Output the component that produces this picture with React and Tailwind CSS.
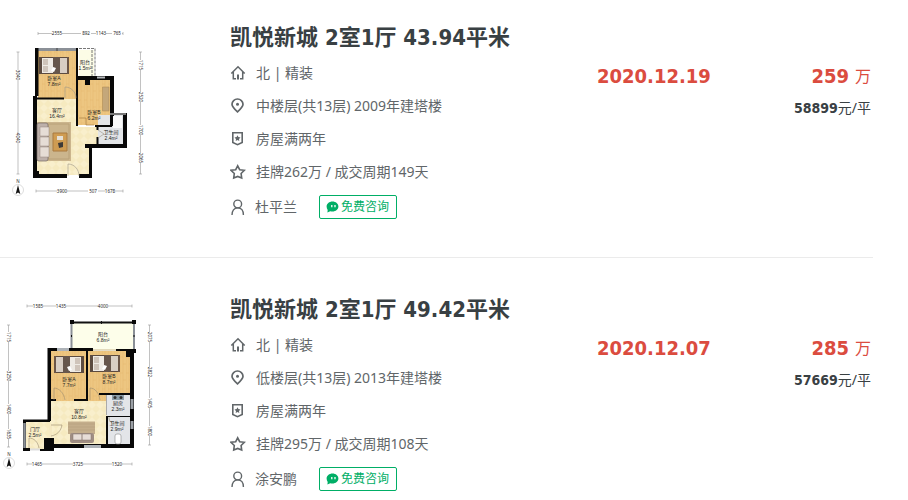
const listings = [
  {
    id: 1,
    title: "凯悦新城 2室1厅 43.94平米",
    facing: "北 | 精装",
    floor: "中楼层(共13层) 2009年建塔楼",
    tax: "房屋满两年",
    deal: "挂牌262万 / 成交周期149天",
    agent: "杜平兰",
    date: "2020.12.19",
    price: "259",
    unitPrice: "58899",
  },
  {
    id: 2,
    title: "凯悦新城 2室1厅 49.42平米",
    facing: "北 | 精装",
    floor: "低楼层(共13层) 2013年建塔楼",
    tax: "房屋满两年",
    deal: "挂牌295万 / 成交周期108天",
    agent: "涂安鹏",
    date: "2020.12.07",
    price: "285",
    unitPrice: "57669",
  },
];

const App = () => {
  return (
    <main className="bg-white pt-5 pr-[35px] font-['Noto_Sans','Noto_Sans_CJK_SC',sans-serif] text-sm text-[#616669]">
      <ul className="flex flex-col gap-[34px]">
        {listings.map((item) => (
          <li
            key={item.id}
            className="flex border-b border-[#ebebeb] pb-[31px] last:border-b-0 last:pb-0"
          >
            <a href={`#listing-${item.id}`} className="w-[230px] shrink-0">
              {item.id === 1 ? <PlanOne /> : <PlanTwo />}
            </a>

            <div className="w-[367px] shrink-0">
              <h2 className="h-9 text-[22px] leading-8 font-bold text-[#394043]">
                <a
                  href={`#listing-${item.id}`}
                  className="font-['DejaVu_Sans_Condensed','Noto_Sans_CJK_SC',sans-serif]"
                >
                  {item.title}
                </a>
              </h2>
              <InfoRow icon={<HouseIcon />} text={item.facing} />
              <InfoRow icon={<PinIcon />} text={item.floor} />
              <InfoRow icon={<BadgeIcon />} text={item.tax} />
              <InfoRow icon={<StarIcon />} text={item.deal} />
              <div className="flex h-[38px] items-center">
                <PersonIcon />
                <a href={`#agent-${item.id}`} className="ml-[9px]">
                  {item.agent}
                </a>
                <button
                  type="button"
                  className="ml-[22px] flex h-6 items-center gap-0.5 rounded-xs border border-[#00ae66] pr-[7px] pl-1.5 text-xs text-[#00ae66]"
                >
                  <ChatIcon />
                  免费咨询
                </button>
              </div>
            </div>

            <p className="mt-10 h-8 font-['DejaVu_Sans_Condensed',sans-serif] text-xl leading-8 font-bold text-[#db4c3f]">
              {item.date}
            </p>

            <div className="mt-10 mr-0.5 ml-auto text-right">
              <p className="flex h-8 items-center justify-end gap-1.5 text-base text-[#db4c3f]">
                <span className="font-['DejaVu_Sans_Condensed',sans-serif] text-xl font-bold">
                  {item.price}
                </span>
                万
              </p>
              <p className="flex h-8 items-center justify-end text-[#394043]">
                <span className="font-['DejaVu_Sans_Condensed',sans-serif] font-bold">
                  {item.unitPrice}
                </span>
                元/平
              </p>
            </div>
          </li>
        ))}
      </ul>
    </main>
  );
};

const InfoRow = ({ icon, text }) => {
  return (
    <div className="flex h-[33px] items-center gap-2.5">
      {icon}
      <span>{text}</span>
    </div>
  );
};

const HouseIcon = () => (
  <svg className="size-4" viewBox="0 0 16 16" fill="none" stroke="currentColor" strokeWidth="1.5">
    <path d="M1.3 8.5 8 1.8l6.7 6.7M3.3 7v6.8h2.7M12.7 7v6.8H10" />
    <path d="M8 9.5v5" strokeWidth="2" />
  </svg>
);

const PinIcon = () => (
  <svg className="size-4" viewBox="0 0 16 16" fill="none" stroke="currentColor" strokeWidth="1.7">
    <path d="M7.5 13.8C4.4 11 2 8.6 2 6.2a5.5 5.2 0 0 1 11 0c0 2.4-2.4 4.8-5.5 7.6Z" />
    <circle cx="7.5" cy="6.2" r="1.5" fill="currentColor" stroke="none" />
  </svg>
);

const BadgeIcon = () => (
  <svg className="size-4" viewBox="0 0 16 16" fill="none" stroke="currentColor" strokeWidth="1.6">
    <path d="M2.8 1.8h9.4v9.6L7.5 13.6l-4.7-2.2Z" />
    <path
      d="m7.5 4.2.9 1.9 2.1.3L9 7.9l.3 2.1-1.8-1-1.8 1L6 7.9 4.5 6.4l2.1-.3Z"
      fill="currentColor"
      stroke="none"
    />
  </svg>
);

const StarIcon = () => (
  <svg className="size-4" viewBox="0 0 16 16" fill="none" stroke="currentColor" strokeWidth="1.6">
    <path d="m7.7 1.8 2 3.9 4.7.6-3.3 3.2.6 4.5-4-1.6-4 1.6.6-4.5L1 6.3l4.7-.6Z" />
  </svg>
);

const PersonIcon = () => (
  <svg className="h-[17px] w-4" viewBox="0 0 16 17" fill="none" stroke="currentColor" strokeWidth="1.4">
    <circle cx="7.7" cy="5" r="3.9" />
    <path d="M2 16c0-4.2 2-7.1 5.7-7.1s5.7 2.9 5.7 7.1" />
  </svg>
);

const ChatIcon = () => (
  <svg className="h-3 w-[13px]" viewBox="0 0 13 12">
    <path
      d="M6.5.6C9.8.6 12.4 2.8 12.4 5.6S9.8 10.6 6.5 10.6c-.8 0-1.5-.1-2.2-.3L1.4 11.4l.3-2.5C1 8 .6 6.9.6 5.6.6 2.8 3.2.6 6.5.6Z"
      fill="#00ae66"
    />
    <path d="M5.8 4v2.2M9 4v2.2" stroke="#fff" strokeWidth="1.3" />
  </svg>
);

const Label = ({ x, y, name, area }) => (
  <g
    className="font-['Liberation_Sans','Noto_Sans_CJK_SC',sans-serif]"
    textAnchor="middle"
    fontSize="5"
    fill="#222"
  >
    <text x={x} y={y}>
      {name}
    </text>
    <text x={x} y={y + 6}>
      {area}
    </text>
  </g>
);

// Dimension line along one side of a plan, `parts` are [position, number]
const Ruler = ({ at, from, to, parts, vertical }) => (
  <g transform={vertical ? `translate(${at} 0) rotate(90)` : `translate(0 ${at})`}>
    <path d={`M${from} 0H${to}M${from} -1.5v3M${to} -1.5v3`} stroke="#999" strokeWidth=".6" />
    {parts.map(([pos, number]) => (
      <g key={pos}>
        <rect x={pos - 5} y="-2" width="10" height="4" fill="#fff" />
        <text x={pos} y="1.6" textAnchor="middle" fontSize="4.5" fill="#222">
          {number}
        </text>
      </g>
    ))}
  </g>
);

const Compass = ({ x, y }) => (
  <g transform={`translate(${x} ${y})`}>
    <circle r="5.5" fill="#fff" stroke="#bbb" strokeWidth=".5" />
    <path d="M0-5 2.3 4 0 2.5-2.3 4Z" fill="#111" />
    <text y="-7" textAnchor="middle" fontSize="4.5" fill="#333">
      N
    </text>
  </g>
);

const Bed = ({ x, y, flip }) => (
  <g transform={flip ? `translate(${x + 30} ${y}) scale(-1 1)` : `translate(${x} ${y})`}>
    <rect width="30" height="17" fill="#5c4b40" />
    <rect x="3" y="1" width="27" height="15" fill="#eeeae4" />
    <path d="M4 2h5v6H4zM4 9h5v6H4z" fill="#cfc4ba" />
    <path d="M14 0h7v17h-7z" fill="#66564c" />
    <path d="M21 1h7v15h-7z" fill="#d8cec4" />
    <path d="m14 10 3 1-2 4-3-1Z" fill="#fff" />
    <path d="M28 0h2v17h-2z" fill="#6b5546" />
  </g>
);

const Patterns = ({ id }) => (
  <defs>
    <pattern id={`wood-${id}`} width="6" height="16" patternUnits="userSpaceOnUse">
      <path d="M0 0h6v16H0z" fill="#edc681" />
      <path d="M0 0v16M3 0v16M0 4h3M3 11h3" stroke="#e2b76c" strokeWidth=".5" />
    </pattern>
    <pattern id={`stone-${id}`} width="8" height="8" patternUnits="userSpaceOnUse">
      <path d="M0 0h8v8H0z" fill="#f6eac0" />
      <path d="m0 4 4-4 4 4-4 4Z" fill="#f9efcc" />
    </pattern>
  </defs>
);

const PlanOne = () => (
  <svg className="w-40" viewBox="0 20 160 180">
    <Patterns id="one" />
    <path d="M38 51h40v48H38z" fill="url(#wood-one)" />
    <path d="M78 79h33v46H78z" fill="url(#wood-one)" />
    <path d="M37 99h41v28h20v18h-9v30H37z" fill="url(#stone-one)" />
    <path d="M79 50h15v27H79z" fill="#fcfce6" />
    <path d="M98 115h26v29H98z" fill="#e3e5e8" />
    <path d="M79 48.5h16V77M92 50v26" fill="none" stroke="#555" strokeWidth=".8" strokeDasharray="3 1" />
    <path d="M36 49.5h42" stroke="#8b9097" strokeWidth="3" />
    <path d="M57 48v3" stroke="#444" />
    <path d="M35 48h3.5v48H37v78h2v-3h-2v3h30v4H33V96h2z" fill="#080808" />
    <path d="M79 174h10v-26h-4v-4h38v-31h4v35H92v30H79z" fill="#080808" />
    <path d="M78 76h36v50h-4V80H90v5h-5v-5h-7z" fill="#080808" />
    <path d="M77 48v78M36 98.5h28M95 126h17" stroke="#080808" strokeWidth="2" fill="none" />
    <path d="M97.5 126v4M97.5 137v7" stroke="#080808" strokeWidth="2" />
    <path d="M110 114h16" stroke="#777" strokeWidth="2" />
    <path d="M97 77.5h8" stroke="#b5b8bb" strokeWidth="2" />
    <path d="M113 116h9v12h-9z" fill="#fafafa" />
    <path d="M102.5 87h6.5v24h-6.5z" fill="#c4a77a" stroke="#a98650" strokeWidth=".5" />
    <Bed x={39} y={57} />
    <path d="M37 122h34v39H37z" fill="#cbb58d" />
    <path d="M48 124h21v35H48z" fill="none" stroke="#b9a179" />
    <rect x="37" y="123" width="11" height="38" rx="2" fill="#bdb0aa" stroke="#756b66" strokeWidth=".7" />
    <path d="M40 127h9v9h-9zM40 137h9v9h-9zM40 147h9v10h-9z" fill="#e6ddd6" stroke="#94867d" strokeWidth=".5" />
    <path d="M53 133h14v18H53z" fill="#cf9c52" stroke="#a97b40" />
    <path d="M57 136h6v4h-6z" fill="#e5e0d6" />
    <path d="m58 143 5-1v5l-4 1Z" fill="#3d3a38" />
    <path d="M65 98V87c6 0 11 5 11 11M68 176v-12c6 0 11 5 11 12M98 130l6 4-6 4" fill="none" stroke="#9a9384" strokeWidth=".6" />
    <path d="M79 118h7v7h8" fill="none" stroke="#9a7138" strokeWidth=".6" />
    <Label x={54} y={80} name="卧室A" area="7.8m²" />
    <Label x={85} y={64} name="阳台" area="1.5m²" />
    <Label x={57} y={112} name="客厅" area="16.4m²" />
    <Label x={94} y={114} name="卧室B" area="6.2m²" />
    <Label x={111} y={134} name="卫生间" area="2.4m²" />
    <Ruler at={33.5} from={38} to={123} parts={[[57, "2555"], [86, "892"], [101, "1143"], [117, "765"]]} />
    <Ruler at={191} from={36} to={123} parts={[[62, "3900"], [93, "507"], [110, "1678"]]} />
    <Ruler at={18} from={52} to={174} parts={[[75, "3040"], [138, "4040"]]} vertical />
    <Ruler at={140.5} from={52} to={174} parts={[[65, "1715"], [97, "2520"], [130, "1700"], [158, "2065"]]} vertical />
    <Compass x={18} y={190} />
  </svg>
);

const PlanTwo = () => (
  <svg className="w-40" viewBox="0 291 160 180">
    <Patterns id="two" />
    <path d="M72 322h61v27H72z" fill="#fdfeea" />
    <path d="M51 350h80v43h-24v7H51z" fill="url(#wood-two)" />
    <path d="M50 400h57v44H50zM26 421h26v27H26z" fill="url(#stone-two)" />
    <path d="M107 394h24v50h-24z" fill="#e3e5e8" />
    <path d="M71.5 323v25M134 323v25" stroke="#8b9097" strokeWidth="2" />
    <path d="M72 321.5h62" stroke="#111" strokeWidth="2" />
    <path d="M101.5 320v3M71.5 334v2M134 334v2" stroke="#111" />
    <path d="M70 319h4v4h-4zM132 319h4v4h-4zM132 348h4v4h-4z" fill="#080808" />
    <path d="M47.5 347H93v3h-5v50H74v-2h12v-48H51v48h5v2h-5v20h-3.5z" fill="#080808" />
    <path d="M116 348h18v99H50v-4h56v-28h24v-21H99v-2h31v-36h-4v-6h-10zM108 416v27h22v-27z" fill="#080808" fillRule="evenodd" />
    <path d="M23 418.5h27v2.5H26v26h4v3h-7zM44 437h10v13H40v-2h4z" fill="#080808" />
    <path d="M24.5 422v25" stroke="#8b9097" strokeWidth="2.5" />
    <path d="M30 448.5h10" stroke="#ddd" strokeWidth="2" />
    <path d="M57 348.5h12M84 445.5h17" stroke="#aeb3b8" strokeWidth="3" />
    <path d="M132 398v10M132 420v8" stroke="#9a9fa5" strokeWidth="3" />
    <path d="M93 349h23" stroke="#c9b98f" />
    <path d="M106.5 394v20" stroke="#aaa" strokeWidth="1" />
    <path d="M50.5 424v12" stroke="#f5e8c2" strokeWidth="3" />
    <Bed x={54} y={355} flip />
    <Bed x={90} y={354} />
    <path d="M68 420.5h27V433H68z" fill="#c4ae8c" />
    <path d="M68 423h27M68 426h27M68 429h27" stroke="#b19a79" strokeWidth=".5" />
    <rect x="70" y="432" width="24" height="10" rx="2" fill="#9f8d83" />
    <path d="M73 433h9v6h-9zM82 433h9v6h-9z" fill="#e7ddd7" stroke="#85776e" strokeWidth=".5" />
    <path d="M112 394h12v5h-12z" fill="#8d9faa" />
    <circle cx="115" cy="396.5" r="1.5" fill="#333" />
    <circle cx="121" cy="396.5" r="1.5" fill="#333" />
    <rect x="115" y="433" width="6" height="10" rx="2" fill="#fff" stroke="#888" strokeWidth=".6" />
    <path d="M54 399V387c5 0 10 5 11 12M90 399v-12c5 0 9 5 10 12M51 424h11c-1 6-5 10-11 11M29 447v-10c5 0 9 4 10 10M109 416c0 5 3 7 7 7" fill="none" stroke="#9a8c70" strokeWidth=".6" />
    <Label x={103} y={335} name="阳台" area="6.8m²" />
    <Label x={69} y={380} name="卧室A" area="7.7m²" />
    <Label x={109} y={377} name="卧室B" area="8.7m²" />
    <Label x={79} y={412} name="客厅" area="10.8m²" />
    <Label x={118} y={404} name="厨房" area="2.3m²" />
    <Label x={117} y={424} name="卫生间" area="2.9m²" />
    <Label x={35} y={430} name="门厅" area="2.5m²" />
    <Ruler at={305} from={27} to={132} parts={[[38, "1585"], [61, "1435"], [103, "4000"]]} />
    <Ruler at={463} from={27} to={132} parts={[[37, "1465"], [78, "3725"], [117, "1520"]]} />
    <Ruler at={8.5} from={324} to={446} parts={[[336, "1715"], [375, "3250"], [408, "1400"], [433, "1635"]]} vertical />
    <Ruler at={149.5} from={324} to={444} parts={[[336, "2075"], [371, "2822"], [402, "1405"], [430, "1800"]]} vertical />
    <Compass x={9} y={462} />
  </svg>
);

export default App;
